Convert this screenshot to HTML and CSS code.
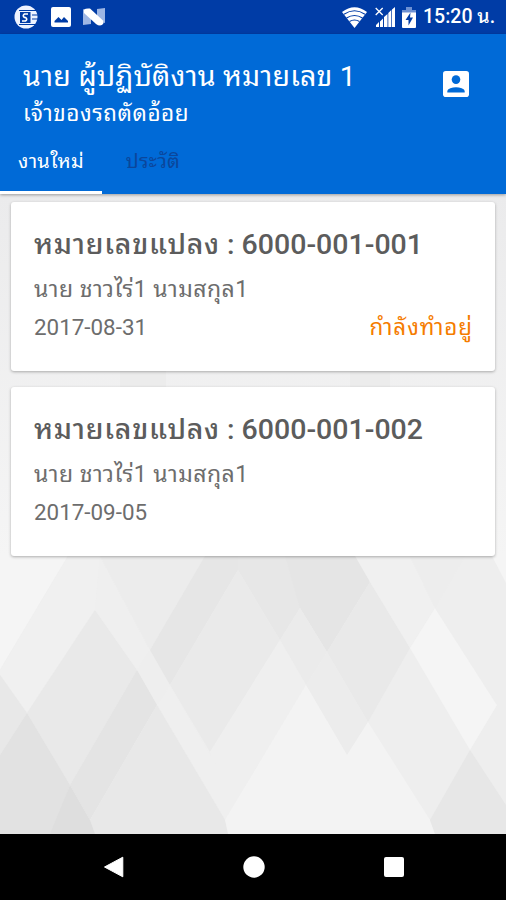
FILE: index.html
```html
<!DOCTYPE html>
<html lang="th">
  <head>
    <meta charset="UTF-8" />
    <meta name="viewport" content="width=device-width, initial-scale=1.0" />
    <title>งานใหม่</title>
    <link rel="stylesheet" href="styles.css">
  </head>
  <body>
    <div class="status-bar">
      <div class="status-icons">
        <svg width="25" height="24" viewBox="0 0 25 24">
          <circle cx="12" cy="12" r="11.5" fill="#eef3ff" />
          <path d="M5 5.500h18M18 10h7M18 14h7M5 19.500h17" stroke="#003ca6" stroke-width="1.200" />
          <rect x="6" y="7" width="10.500" height="11" fill="#003ca6" />
          <path d="M14 9h-3.500q-2.500 1.700 0 3.500h1q2.500 1.700 0 3.500h-3.500" fill="none" stroke="#fff" stroke-width="1.600" />
        </svg>
        <svg width="20" height="20" viewBox="0 0 20 20">
          <rect width="20" height="20" rx="2" fill="#fff" />
          <path d="M3.500 15.500v-1.500l4-4 3 3 2.500-3 4 4v1.500z" fill="#003ca6" />
        </svg>
        <svg width="22" height="18" viewBox="0 0 22 18">
          <path d="M0 1l8 5v10l-8 1zM14 1l8-1v15l-8-2z" fill="#9db6e4" />
          <path d="M1 1.500Q3 0 7 .5L20 12.500Q21.500 17 17 17.500Q15 17.500 13 16L1 5z" fill="#fff" />
        </svg>
      </div>
      <div class="status-info">
        <svg width="25" height="21" viewBox="0 0 25 21">
          <path d="M12.500 21L0 5Q12.500-4.500 25 5z" fill="#fff" />
          <path d="M2 7.300q10.500-7 21 0M4.500 11q8-5 16 0M7.500 14.500q5-3 10 0" fill="none" stroke="#003ca6" stroke-width="1.100" />
        </svg>
        <svg class="signal" width="21" height="20" viewBox="0 0 21 20">
          <path d="M1 20v-2l3-3v5zM5 20v-5.500l3-3V20zM9 20V10l3.500-3v13zM13.300 20V6l3-3V20zM17 20V2.500L20 0v20z" fill="#fff" />
          <path d="M.7 1l7 7M7.700 1l-7 7" stroke="#fff" stroke-width="1.300" />
        </svg>
        <svg class="battery" width="14" height="21" viewBox="0 0 14 21">
          <path d="M0 3h4V0h6v3h4v3H0z" fill="#6e91d2" />
          <path d="M0 5.500h14V20q0 1-1 1H1q-1 0-1-1z" fill="#fff" />
          <path d="M8.500 5.500L3.500 13h3v5.500l4.500-8H8z" fill="#003ca6" />
        </svg>
        <span class="clock">15:20 น.</span>
      </div>
    </div>

    <header class="header">
      <div class="header-top">
        <div>
          <h1 class="user-name">นาย ผู้ปฏิบัติงาน หมายเลข 1</h1>
          <p class="user-role">เจ้าของรถตัดอ้อย</p>
        </div>
        <svg class="profile" width="26" height="26" viewBox="0 0 26 26">
          <rect width="26" height="26" rx="2.800" fill="#fff" />
          <circle cx="13" cy="8.600" r="4.300" fill="#006ad7" />
          <path d="M4.300 21.500v-1.400q0-1.600 3-2.800 5.700-2.200 11.400 0 3 1.200 3 2.800v1.400z" fill="#006ad7" />
        </svg>
      </div>
      <nav class="tabs">
        <a class="tab active">งานใหม่</a>
        <a class="tab">ประวัติ</a>
      </nav>
    </header>

    <main class="content">
      <svg class="pattern" viewBox="0 194 506 640" preserveAspectRatio="none">
        <defs>
          <linearGradient id="fade" x1="0" y1="0" x2="0" y2="1">
            <stop offset="0" stop-color="#ebebec" />
            <stop offset="1" stop-color="#f5f5f5" />
          </linearGradient>
        </defs>
        <rect y="194" width="506" height="640" fill="#eeeeee" />
        <path d="M0 194h506v362H0z" fill="url(#fade)" />
        <path d="M120 371h46v16h-46zM350 371h40v16h-40z" fill="#ececec" />
        <path d="M0 556h68L0 670z" fill="#f5f5f5" />
        <path d="M68 556h32l-5 54-68 103-27-38v-5z" fill="#f0f0f0" />
        <path d="M95 610l42 60-67 115-43-72z" fill="#e9e9e9" />
        <path d="M100 556l50 94-13 20-42-60z" fill="#efefef" />
        <path d="M100 556h105l-55 94z" fill="#ececec" />
        <path d="M205 556h33v14l-68 115-20-35z" fill="#e6e6e6" />
        <path d="M238 570l42 70-70 112-40-67z" fill="#eaeaea" />
        <path d="M238 556h87l-25 52-20 32-42-70z" fill="#e7e7e7" />
        <path d="M285 556h77l8 26-43 70-27-44z" fill="#e5e5e5" />
        <path d="M300 608l27 44-21 33-26-45z" fill="#ebebeb" />
        <path d="M370 582l40 66-42 74-41-70z" fill="#e9e9e9" />
        <path d="M355 556h55l25 52-25 40-40-66z" fill="#f0f0f0" />
        <path d="M435 608l62 97-27 45-60-102z" fill="#f5f5f5" />
        <path d="M410 556h55l-30 52z" fill="#ededed" />
        <path d="M465 556h41v149h-9l-62-97z" fill="#eeeeee" />
        <path d="M492 556h14v27z" fill="#f5f5f5" />
        <path d="M280 640l26 45-81 135-15-68z" fill="#efefef" />
        <path d="M306 685l21-33 41 70-21 33z" fill="#ececec" />
        <path d="M306 685l41 70 21-33 62 98 5 14H225v-14z" fill="#f3f3f3" />
        <path d="M170 685l55 95v40l-68-115z" fill="#efefef" />
        <path d="M137 670l20 35-67 115-20-35z" fill="#e4e4e4" />
        <path d="M157 705l68 115 3 14H92l-2-14z" fill="#e8e8e8" />
        <path d="M0 675l27 38-27 42z" fill="#e8e8e8" />
        <path d="M27 713l43 72-18 49H0v-79z" fill="#e2e2e2" />
        <path d="M70 785l20 35 5 14H50z" fill="#dedede" />
        <path d="M470 750l36 55v29h-71l-5-14z" fill="#e7e7e7" />
      </svg>

      <section class="card">
        <h2 class="card-title"><span class="card-label">หมายเลขแปลง</span> : 6000-001-001</h2>
        <p class="card-owner">นาย ชาวไร่1 นามสกุล1</p>
        <div class="card-row">
          <span class="card-date">2017-08-31</span>
          <span class="card-status">กำลังทำอยู่</span>
        </div>
      </section>

      <section class="card">
        <h2 class="card-title"><span class="card-label">หมายเลขแปลง</span> : 6000-001-002</h2>
        <p class="card-owner">นาย ชาวไร่1 นามสกุล1</p>
        <div class="card-row">
          <span class="card-date">2017-09-05</span>
        </div>
      </section>
    </main>

    <div class="nav-bar">
      <svg width="22" height="22" viewBox="0 0 22 22">
        <path d="M1.500 11L19.800 1.200v19.600z" fill="#fff" stroke="#fff" stroke-linejoin="round" />
      </svg>
      <svg width="22" height="22" viewBox="0 0 22 22">
        <circle cx="11" cy="11" r="10.700" fill="#fff" />
      </svg>
      <svg width="22" height="22" viewBox="0 0 22 22">
        <rect x="1" y="1" width="20" height="20" rx="2" fill="#fff" />
      </svg>
    </div>
  </body>
</html>
```
FILE: styles.css
```css
* {
  box-sizing: border-box;
}
body {
  margin: 0;
  height: 900px;
  display: flex;
  flex-direction: column;
  font-family: Roboto, "Noto Sans Thai Looped", "Noto Looped Thai", Loma, Waree, Garuda, "Droid Sans Thai", sans-serif;
  overflow: hidden;
}
h1,
h2,
p {
  margin: 0;
  white-space: nowrap;
}
svg {
  display: block;
  flex-shrink: 0;
}
.status-bar {
  height: 34px;
  padding: 0 11px 0 14px;
  background-color: #003ca6;
  color: #fff;
  display: flex;
  justify-content: space-between;
  align-items: center;
}
.status-icons {
  display: flex;
  align-items: center;
  gap: 12px;
}
.status-info {
  display: flex;
  align-items: center;
}
.signal {
  margin-left: 8px;
}
.battery {
  margin-left: 6px;
}
.clock {
  width: 72px;
  margin-left: 7px;
  font-size: 19.5px;
  font-weight: 500;
  line-height: 36px;
  white-space: nowrap;
}
.header {
  position: relative;
  z-index: 1;
  height: 160px;
  background-color: #006ad7;
  color: #fff;
  box-shadow: 0 1px 3px rgba(0, 0, 0, 0.35);
}
.header-top {
  height: 110px;
  padding: 24px 37px 0 23px;
  display: flex;
  justify-content: space-between;
}
.user-name {
  font-size: 28.5px;
  font-weight: 400;
  line-height: 38px;
  letter-spacing: 0.2px;
}
.user-role {
  font-size: 22.5px;
  line-height: 34px;
  letter-spacing: 0.55px;
}
.profile {
  margin-top: 13px;
}
.tabs {
  display: flex;
}
.tab {
  width: 102px;
  height: 50px;
  padding-bottom: 16px;
  font-size: 20px;
  line-height: 34px;
  text-align: center;
  letter-spacing: 0.3px;
  white-space: nowrap;
  color: #0b469b;
}
.tab.active {
  color: #fff;
  border-bottom: 3px solid #fff;
}
.content {
  position: relative;
  height: 640px;
  padding: 8px 11px;
  display: flex;
  flex-direction: column;
  gap: 16px;
}
.pattern {
  position: absolute;
  top: 0;
  left: 0;
  width: 100%;
  height: 100%;
}
.card {
  position: relative;
  height: 169px;
  padding: 23px 22px 0 23px;
  background-color: #fff;
  border-radius: 3px;
  box-shadow: 0 1px 3px rgba(0, 0, 0, 0.3);
  color: #6d6d6d;
}
.card-title {
  font-size: 28.5px;
  font-weight: 500;
  line-height: 40px;
  color: #5c5c5c;
}
.card-label {
  letter-spacing: 0.75px;
}
.card-owner {
  padding-top: 4px;
  font-size: 23px;
  line-height: 42px;
  letter-spacing: 0.45px;
}
.card-row {
  display: flex;
  justify-content: space-between;
  font-size: 22.4px;
  line-height: 32px;
}
.card-status {
  color: #f57c00;
  letter-spacing: 0.9px;
}
.nav-bar {
  height: 66px;
  padding: 0 101px 0 103px;
  background-color: #000;
  display: flex;
  justify-content: space-between;
  align-items: center;
}
```
